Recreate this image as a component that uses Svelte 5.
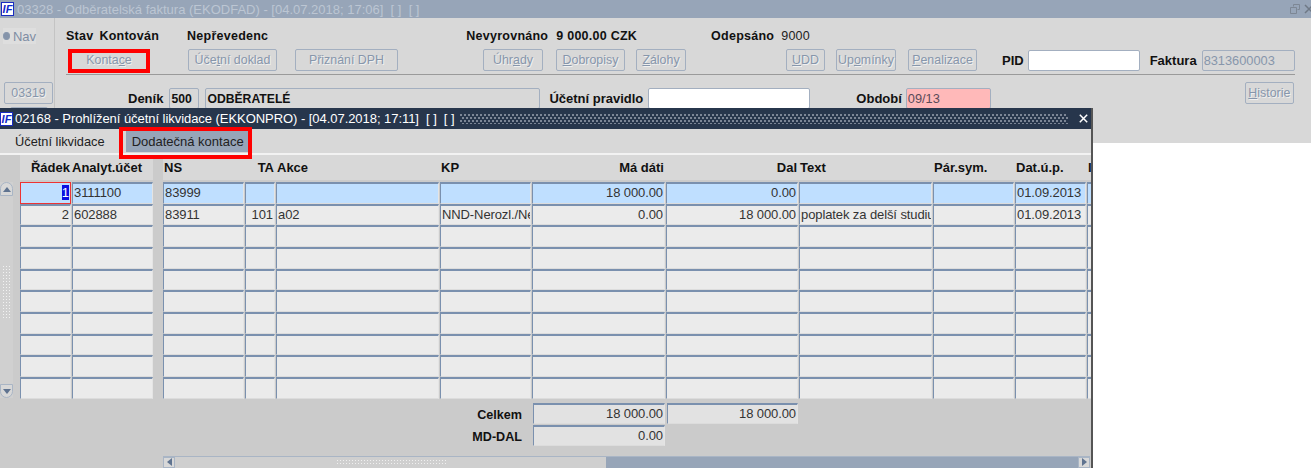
<script>
  // top form buttons, left = margin from previous item, u = index of the underlined letter
  const topButtons = [
    { label: 'Účetní doklad', w: 89, left: 39, u: 3 },
    { label: 'Přiznání DPH', w: 103, left: 18, u: -1 },
    { label: 'Úhrady', w: 60, left: 85, u: 3 },
    { label: 'Dobropisy', w: 69, left: 13, u: 0 },
    { label: 'Zálohy', w: 50, left: 11, u: 0 },
    { label: 'UDD', w: 39, left: 100, u: 0 },
    { label: 'Upomínky', w: 60, left: 11, u: 2 },
    { label: 'Penalizace', w: 69, left: 12, u: 0 }
  ];

  const columns = [
    { title: 'NS', w: 82, h: 'l' },
    { title: 'TA', w: 31, h: 'r' },
    { title: 'Akce', w: 164, h: 'l' },
    { title: 'KP', w: 92, h: 'l' },
    { title: 'Má dáti', w: 134, h: 'r' },
    { title: 'Dal', w: 133, h: 'r' },
    { title: 'Text', w: 134, h: 'l' },
    { title: 'Pár.sym.', w: 82, h: 'l' },
    { title: 'Dat.ú.p.', w: 72, h: 'l' },
    { title: 'I', w: 20, h: 'l' }
  ];
  const template = columns.map((c) => c.w + 'px').join(' ');

  const rows = [
    { no: '1', acc: '3111100', cells: ['83999', '', '', '', '18 000.00', '0.00', '', '', '01.09.2013', ''] },
    { no: '2', acc: '602888', cells: ['83911', '101', 'a02', 'NND-Nerozl./Nerozlišeno', '0.00', '18 000.00', 'poplatek za delší studium', '', '01.09.2013', ''] }
  ];
  while (rows.length < 10) rows.push({ no: '', acc: '', cells: ['', '', '', '', '', '', '', '', '', ''] });

  const isRight = (i) => i === 1 || i === 4 || i === 5;
</script>

<div class="desktop">
  <section class="parent">
    <header class="parent-title">
      <span class="logo">IF</span>
      <span class="parent-caption">03328 - Odběratelská faktura (EKODFAD) - [04.07.2018; 17:06]&nbsp; [ ]&nbsp; [ ]</span>
      <svg class="restore" width="10" height="10" viewBox="0 0 10 10" fill="none" stroke="#7d8794">
        <path d="M3.5 2.5V.5h6v5h-2M.5 3.5h6v6h-6z" />
      </svg>
      <svg class="parent-close" width="10" height="10" viewBox="0 0 10 10" fill="none" stroke="#6f7986" stroke-width="1.5">
        <path d="M1 1l8 8M9 1l-8 8" />
      </svg>
    </header>

    <div class="parent-body">
      <aside class="nav">
        <div class="nav-radio"><span class="radio"></span>Nav</div>
        <div class="btn nav-btn">03319</div>
        <div class="btn nav-btn2"></div>
      </aside>

      <div class="form">
        <div class="status">
          <b class="stav">Stav</b><b class="kontovan">Kontován</b><b class="neprev">Nepřevedenc</b>
          <b class="nevyr">Nevyrovnáno</b><b class="castka">9 000.00 CZK</b>
          <b class="odep">Odepsáno</b><span class="odep-val">9000</span>
        </div>

        <div class="actions">
          <div class="btn kontace">Konta<u>c</u>e</div>
          {#each topButtons as b}
            <div class="btn" style="width:{b.w}px;margin-left:{b.left}px">
              {#if b.u >= 0}{b.label.slice(0, b.u)}<u>{b.label[b.u]}</u>{b.label.slice(b.u + 1)}{:else}{b.label}{/if}
            </div>
          {/each}
          <b class="pid-label">PID</b>
          <div class="input white pid"></div>
          <b class="fak-label">Faktura</b>
          <div class="input faktura">8313600003</div>
        </div>

        <div class="rule"></div>

        <div class="fields">
          <b class="denik-label">Deník</b>
          <div class="input denik"><b>500</b></div>
          <div class="input denik-name"><b>ODBĚRATELÉ</b></div>
          <b class="pravidlo-label">Účetní pravidlo</b>
          <div class="input white pravidlo"></div>
          <b class="obdobi-label">Období</b>
          <div class="input obdobi">09/13</div>
          <div class="btn historie"><u>H</u>istorie</div>
        </div>
      </div>
    </div>
  </section>

  <section class="child">
    <header class="child-title">
      <span class="logo">IF</span>
      <span class="child-caption">02168 - Prohlížení účetní likvidace (EKKONPRO) - [04.07.2018; 17:11]&nbsp; [ ]&nbsp; [ ]</span>
      <span class="dots"></span>
      <svg class="child-close" width="9" height="9" viewBox="0 0 9 9" fill="none" stroke="#fff" stroke-width="1.5">
        <path d="M.8.8l7.4 7.4M8.2.8L.8 8.2" />
      </svg>
    </header>

    <nav class="tabs">
      <span class="tab">Účetní likvidace</span>
      <span class="tab active">Dodatečná kontace</span>
    </nav>

    <div class="table">
      <div class="vscroll">
        <div class="arrow up">
          <svg width="8" height="5" viewBox="0 0 8 5"><path d="M4 0l4 5H0z" fill="#5f7390" /></svg>
        </div>
        <div class="vtrack"><span class="grip"></span></div>
        <div class="arrow down">
          <svg width="8" height="5" viewBox="0 0 8 5"><path d="M0 0h8L4 5z" fill="#5f7390" /></svg>
        </div>
      </div>

      <div class="frozen">
        <div class="head frozen-head">
          <b class="right">Řádek</b>
          <b>Analyt.účet</b>
        </div>
        {#each rows as r, i}
          <div class="row frozen-row" class:selected={i === 0}>
            <div class="cell right" class:current={i === 0}>
              {#if i === 0}<mark>{r.no}</mark>{:else}{r.no}{/if}
            </div>
            <div class="cell">{r.acc}</div>
          </div>
        {/each}
      </div>

      <div class="scrolling">
        <div class="head" style="grid-template-columns:{template}">
          {#each columns as c}
            <b class:right={c.h === 'r'}>{c.title}</b>
          {/each}
        </div>
        {#each rows as r, i}
          <div class="row" class:selected={i === 0} style="grid-template-columns:{template}">
            {#each r.cells as v, j}
              <div class="cell" class:right={isRight(j)}>{v}</div>
            {/each}
          </div>
        {/each}
      </div>
    </div>

    <div class="totals">
      <b class="total-label">Celkem</b>
      <div class="cell total right">18 000.00</div>
      <div class="cell total right">18 000.00</div>
      <b class="total-label">MD-DAL</b>
      <div class="cell total right">0.00</div>
    </div>

    <div class="hscroll">
      <div class="harrow">
        <svg width="5" height="8" viewBox="0 0 5 8"><path d="M5 0v8L0 4z" fill="#5f7390" /></svg>
      </div>
      <div class="hthumb"><span class="hgrip"></span></div>
      <div class="htrack"></div>
      <div class="harrow end">
        <svg width="5" height="8" viewBox="0 0 5 8"><path d="M0 0v8l5-4z" fill="#5f7390" /></svg>
      </div>
    </div>

    <div class="mark-tab"></div>
  </section>

  <div class="mark-kontace"></div>
</div>

<style>
  :global(body) {
    margin: 0;
    background: #fff;
  }

  .desktop {
    position: relative;
    width: 1311px;
    height: 468px;
    overflow: hidden;
    font-family: "Liberation Sans", Arial, sans-serif;
    font-size: 13px;
    color: #2c2c2c;
  }

  b {
    color: #111;
    font-weight: 700;
    white-space: nowrap;
  }

  /* parent window */
  .parent {
    height: 143px;
    background: #d8d8d8;
    overflow: hidden;
  }

  .parent-title {
    display: flex;
    align-items: center;
    height: 18px;
    background: #97a5b8;
  }

  .logo {
    flex: none;
    width: 13px;
    height: 14px;
    margin-left: 1px;
    background: #fff;
    border: 1px solid #1a2cc0;
    box-sizing: border-box;
    color: #1128c8;
    font: italic 700 11px/12px "Liberation Sans", sans-serif;
    text-align: center;
  }

  .parent-caption {
    margin-left: 3px;
    font-size: 13px;
    color: #bcc6d3;
    white-space: pre;
  }

  .restore {
    margin-left: auto;
  }

  .parent-close {
    margin: 0 -3px 0 4px;
  }

  .parent-body {
    display: flex;
    height: 125px;
  }

  .nav {
    flex: none;
    width: 55px;
    box-sizing: border-box;
    border-right: 1px solid #c4c4c4;
    padding: 10px 0 0 3px;
    color: #7e8da3;
  }

  .nav-radio {
    display: flex;
    align-items: center;
    width: 33px;
    height: 16px;
    background: #dedede;
    font-size: 13px;
  }

  .radio {
    width: 6px;
    height: 6px;
    margin-right: 3px;
    border: 1px solid #8a99ae;
    border-radius: 50%;
    background: #8594aa;
  }

  .btn {
    display: flex;
    align-items: center;
    justify-content: center;
    flex: none;
    height: 22px;
    box-sizing: border-box;
    border: 1px solid #a3afc0;
    border-radius: 2px;
    color: #8796ab;
    font-size: 12.4px;
    text-shadow: 1px 1px 0 #f0f0f0;
    white-space: nowrap;
  }

  .nav-btn {
    width: 49px;
    margin: 38px 0 0 1px;
  }

  .nav-btn2 {
    width: 38px;
    margin: 3px 0 0 7px;
  }

  .form {
    flex: 1;
    padding: 10px 16px 0 11px;
    min-width: 0;
  }

  .status {
    display: flex;
    align-items: center;
    height: 16px;
    font-size: 12.5px;
    letter-spacing: 0.25px;
  }

  .kontovan { margin-left: 6px; }
  .neprev { margin-left: 28px; }
  .nevyr { margin-left: 198px; }
  .castka { margin-left: 8px; }
  .odep { margin-left: 74px; }
  .odep-val { margin-left: 7px; color: #222; }

  .actions {
    display: flex;
    align-items: center;
    margin-top: 5px;
    height: 22px;
  }

  .kontace {
    width: 80px;
    margin-left: 3px;
    border-color: transparent;
  }

  .pid-label { margin-left: 25px; }
  .fak-label { margin-left: 10px; }

  .input {
    flex: none;
    height: 21px;
    box-sizing: border-box;
    padding-left: 1px;
    border: 1px solid #a3afc0;
    border-radius: 2px;
    display: flex;
    align-items: center;
    color: #8796ab;
    font-size: 12.8px;
    white-space: nowrap;
    overflow: hidden;
  }

  .input b {
    font-size: 12.2px;
  }

  .white {
    background: #fff;
  }

  .pid {
    width: 112px;
    margin-left: 4px;
  }

  .faktura {
    width: 93px;
    margin-left: 5px;
  }

  .rule {
    height: 1px;
    margin-top: 3px;
    background: #9a9a9a;
  }

  .fields {
    display: flex;
    align-items: flex-start;
    margin-top: 13px;
  }

  .denik-label { margin-left: 62px; margin-top: 3px; }
  .denik { width: 30px; margin-left: 6px; }
  .denik-name { width: 335px; margin-left: 6px; }
  .pravidlo-label { margin-left: 9px; margin-top: 3px; }
  .pravidlo { width: 162px; margin-left: 5px; }
  .obdobi-label { margin-left: 46px; margin-top: 3px; }
  .obdobi { width: 85px; margin-left: 4px; background: #ffb9b9; color: #5a4b58; }

  .historie {
    width: 49px;
    margin-left: 254px;
    margin-top: -6px;
  }

  /* child window */
  .child {
    position: absolute;
    left: 0;
    top: 108px;
    width: 1093px;
    height: 360px;
    box-sizing: border-box;
    background: #cbcbcb;
    border-right: 2px solid #555;
    overflow: hidden;
  }

  .child-title {
    display: flex;
    align-items: center;
    height: 21px;
    background: #27364c;
    position: relative;
  }

  .child-title .logo {
    margin-left: 0;
  }

  .child-caption {
    margin-left: 2px;
    font-size: 13px;
    letter-spacing: -0.05px;
    color: #fff;
    white-space: pre;
  }

  .dots {
    width: 608px;
    height: 10px;
    margin-left: 5px;
    background-image:
      radial-gradient(circle at 1px 1px, #7c8696 0.8px, transparent 1px),
      radial-gradient(circle at 3px 4px, #7c8696 0.8px, transparent 1px);
    background-size: 4px 6px;
  }

  .child-close {
    position: absolute;
    right: 3px;
    top: 6px;
  }

  .tabs {
    display: flex;
    align-items: center;
    height: 24px;
    background: #d8d8d8;
    border-bottom: 2px solid #f2f2f2;
  }

  .tab {
    margin-left: 15px;
    font-size: 12.8px;
    white-space: nowrap;
    color: #222;
  }

  .active {
    display: flex;
    align-items: center;
    height: 22px;
    margin-left: 21px;
    padding: 0 5px 0 6px;
    font-size: 13px;
    background: #97a5b8;
  }

  .table {
    display: flex;
    align-items: flex-start;
    background: #cbcbcb;
  }

  .vscroll {
    flex: none;
    width: 13px;
    height: 216px;
    margin: 27px 7px 0 0;
    display: flex;
    flex-direction: column;
    background: #d0d0d0;
  }

  .arrow {
    display: flex;
    align-items: center;
    justify-content: center;
    height: 14px;
    background: #d8d8d8;
    border: 1px solid #a9b5c5;
    box-sizing: border-box;
  }

  .up {
    border-radius: 7px 7px 0 0;
  }

  .down {
    border-radius: 0 0 7px 7px;
  }

  .vtrack {
    flex: 1;
    display: flex;
    align-items: center;
    justify-content: center;
  }

  .grip {
    width: 9px;
    height: 55px;
    margin-top: 4px;
    background-image: radial-gradient(circle, #f2f2f2 0.8px, transparent 1px);
    background-size: 3px 3px;
  }

  .frozen {
    flex: none;
    width: 143px;
  }

  .frozen .head {
    width: 133px;
  }

  .frozen-head,
  .frozen-row {
    grid-template-columns: 52px 82px;
  }

  .scrolling {
    flex: none;
  }

  .head {
    display: grid;
    align-items: center;
    height: 25px;
    margin-bottom: 2px;
    background: #d8d8d8;
  }

  .head b {
    padding: 0 2px 0 1px;
  }

  .frozen-head b:last-child {
    padding-left: 0;
  }

  .row {
    display: grid;
    height: 21.67px;
  }

  .cell {
    box-sizing: border-box;
    margin-right: 1px;
    padding: 0 1px;
    border: 2px solid;
    border-width: 2px 1px 1px 1px;
    border-color: #7a90ae #e4e4e4 #dcdcdc #7a90ae;
    background: #ebebeb;
    line-height: 17px;
    letter-spacing: -0.1px;
    white-space: nowrap;
    overflow: hidden;
    color: #333;
  }

  .right {
    text-align: right;
  }

  .selected .cell {
    background: #bfdfff;
  }

  .selected .current {
    border: 1px solid #ee3333;
    line-height: 19px;
  }

  mark {
    background: #0a10e0;
    color: #fff;
  }

  .totals {
    display: grid;
    grid-template-columns: 522px 134px 133px;
    grid-auto-rows: 22px;
    align-items: center;
    margin-top: 4px;
  }

  .total-label {
    padding-top: 2px;
    text-align: right;
    font-size: 12.6px;
  }

  .total {
    height: 21px;
    background: #e2e2e2;
  }

  .totals .total:nth-child(2),
  .totals .total:nth-child(5) {
    margin-left: 11px;
    width: 132px;
  }

  .totals .total:nth-child(3) {
    margin-left: 11px;
    width: 131px;
  }

  .hscroll {
    display: flex;
    width: 927px;
    height: 12px;
    margin: 9px 0 0 163px;
    box-sizing: border-box;
    border-top: 1px solid #a9b5c5;
  }

  .harrow {
    flex: none;
    display: flex;
    align-items: center;
    justify-content: center;
    width: 12px;
    background: #d8d8d8;
    border: 1px solid #a9b5c5;
    box-sizing: border-box;
  }

  .hthumb {
    flex: none;
    width: 431px;
    display: flex;
    align-items: center;
    justify-content: center;
    background: #cfcfcf;
  }

  .hgrip {
    width: 110px;
    height: 6px;
    background-image: radial-gradient(circle, #f0f0f0 0.8px, transparent 1px);
    background-size: 3px 3px;
  }

  .htrack {
    flex: 1;
    background: #97a5b8;
  }

  /* red call-outs drawn over the screenshot */
  .mark-tab,
  .mark-kontace {
    position: absolute;
    box-sizing: border-box;
    border: 4px solid #ff0000;
  }

  .mark-tab {
    left: 119px;
    top: 19px;
    width: 133px;
    height: 32px;
  }

  .mark-kontace {
    left: 68px;
    top: 49px;
    width: 82px;
    height: 24px;
  }
</style>
